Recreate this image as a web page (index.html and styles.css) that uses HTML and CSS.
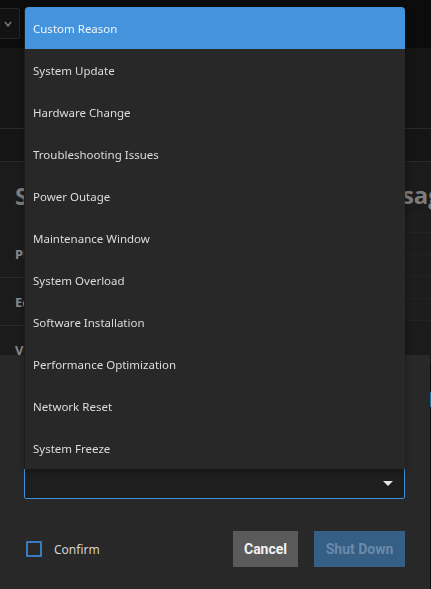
FILE: index.html
```html
<!DOCTYPE html>
<html lang="en">
<head>
<meta charset="utf-8">
<title>Shut Down</title>
<link rel="stylesheet" href="styles.css">
</head>
<body>
<div class="topbar">
  <div class="menu-btn">
    <svg width="8" height="6" viewBox="0 0 8 6"><path d="M1 1 L4 5 L7 1" fill="none" stroke="#7a7a7a" stroke-width="1.4"/></svg>
  </div>
</div>
<div class="subbar"></div>
<div class="tabs"></div>
<div class="cards">
  <section class="card left">
    <h2 class="card-title">System Information</h2>
    <div class="info-row"><span class="info-label">Platform</span></div>
    <div class="info-row"><span class="info-label">Edition</span></div>
    <div class="info-row"><span class="info-label">Version</span></div>
  </section>
  <section class="card right">
    <h2 class="card-title">CPU Usage</h2>
    <div class="stat-row"></div>
    <div class="stat-row"></div>
    <div class="stat-row"></div>
    <div class="stat-row"></div>
    <div class="stat-row"></div>
  </section>
</div>

<div class="dialog">
  <div class="dialog-top">
    <span class="radio-edge"></span>
    <span class="edge-right"></span>
  </div>
  <div class="select">
    <span class="caret"></span>
  </div>
  <div class="actions">
    <label class="confirm"><span class="checkbox"></span><span>Confirm</span></label>
    <button class="btn cancel">Cancel</button>
    <button class="btn primary" disabled>Shut Down</button>
  </div>
</div>

<ul class="options">
  <li class="option active">Custom Reason</li>
  <li class="option">System Update</li>
  <li class="option">Hardware Change</li>
  <li class="option">Troubleshooting Issues</li>
  <li class="option">Power Outage</li>
  <li class="option">Maintenance Window</li>
  <li class="option">System Overload</li>
  <li class="option">Software Installation</li>
  <li class="option">Performance Optimization</li>
  <li class="option">Network Reset</li>
  <li class="option">System Freeze</li>
</ul>
</body>
</html>
```
FILE: styles.css
```css
html, body {
  margin: 0;
  padding: 0;
  height: 100%;
  overflow: hidden;
}
body {
  background: #0c0c0c;
  font-family: "Noto Sans", "Open Sans", sans-serif;
  color: #ddd;
}
.topbar {
  height: 48px;
  background: #0c0c0c;
  display: flex;
  align-items: flex-start;
}
.menu-btn {
  margin-top: 8px;
  margin-left: -30px;
  width: 40px;
  height: 29px;
  border: 1px solid #262626;
  border-radius: 2px;
  background: #121212;
  display: flex;
  align-items: center;
  justify-content: flex-end;
  padding-right: 8px;
  box-sizing: content-box;
}
.menu-btn svg { margin-right: -1px; }
.subbar {
  height: 80px;
  background: #151515;
  border-bottom: 1px solid #2a2a2a;
}
.tabs {
  height: 32px;
  background: #151515;
  border-bottom: 1px solid #2a2a2a;
}
.cards {
  display: grid;
  grid-template-columns: 232px 1fr;
  height: 200px;
  background: #1b1b1b;
}
.card {
  background: #1b1b1b;
  overflow: hidden;
  min-width: 0;
}
.card-title {
  margin: 0;
  height: 68px;
  line-height: 68px;
  font-family: "Open Sans", sans-serif;
  font-size: 24px;
  font-weight: 700;
  color: #7c7c7c;
  white-space: nowrap;
  padding-left: 15px;
}
.right .card-title {
  padding-left: 0;
  height: 49px;
  line-height: 66px;
  text-indent: 97px;
}
.info-row {
  height: 47px;
  border-bottom: 1px solid #2c2c2c;
  display: flex;
  align-items: center;
  padding-left: 15px;
}
.info-label {
  font-size: 13px;
  font-weight: 700;
  color: #8a8a8a;
}
.stat-row {
  height: 21px;
  border-bottom: 1px solid #222;
  background: #1d1d1d;
}

.dialog {
  position: fixed;
  top: 355px;
  left: 0;
  width: 430px;
  bottom: 0;
  background: #282828;
  padding: 0 25px 0 24px;
  box-sizing: border-box;
}
.dialog-top {
  height: 88px;
  position: relative;
}
.radio-edge {
  position: absolute;
  left: 0;
  top: 36px;
  width: 1px;
  height: 12px;
  background: #2f7fc6;
}
.edge-right {
  position: absolute;
  right: -26px;
  top: 37px;
  width: 1px;
  height: 15px;
  background: #2a6f9a;
}
.select {
  box-sizing: border-box;
  height: 56px;
  border: 1px solid #3d8fd8;
  border-radius: 2px;
  background: #1e1e1e;
  display: flex;
  align-items: flex-end;
  justify-content: flex-end;
  padding: 0 11px 12px 0;
}
.caret {
  width: 0;
  height: 0;
  border-left: 5px solid transparent;
  border-right: 5px solid transparent;
  border-top: 5px solid #e4e4e4;
}
.actions {
  margin-top: 32px;
  height: 36px;
  display: flex;
  align-items: center;
}
.confirm {
  display: flex;
  align-items: center;
  gap: 12px;
  font-size: 12px;
  color: #d4d4d4;
  margin-left: 2px;
}
.checkbox {
  width: 12px;
  height: 12px;
  border: 2px solid #3a7bbd;
  border-radius: 1px;
}
.btn {
  font-family: Roboto, "Noto Sans", sans-serif;
  font-weight: 700;
  font-size: 14px;
  height: 36px;
  border: none;
  border-radius: 0;
  padding: 0;
}
.cancel {
  margin-left: auto;
  width: 65px;
  background: #5a5a5a;
  color: #f2f2f2;
}
.primary {
  margin-left: 16px;
  width: 91px;
  background: #365f86;
  color: #6b8aa8;
}

.options {
  position: fixed;
  top: 7px;
  left: 25px;
  width: 380px;
  margin: 0;
  padding: 0;
  list-style: none;
  background: #282828;
  border-radius: 4px 4px 0 0;
  overflow: hidden;
  box-shadow: 0 2px 6px rgba(0,0,0,0.35), -1px 0 0 #222;
}
.option {
  box-sizing: border-box;
  height: 42px;
  line-height: 42px;
  padding: 1px 0 0 8px;
  font-size: 11.5px;
  color: #dcdcdc;
}
.option.active {
  background: #4394dc;
  color: #eef4fb;
}
```
